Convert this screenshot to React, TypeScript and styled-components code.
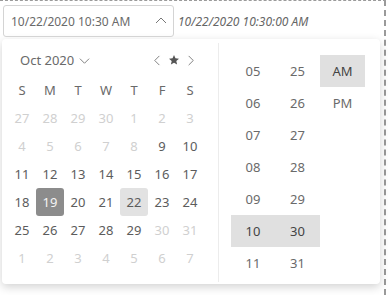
import React from "react";
import styled, { createGlobalStyle } from "styled-components";

const GlobalStyle = createGlobalStyle`
  html, body {
    margin: 0;
    padding: 0;
    background: #ffffff;
    overflow: hidden;
  }
  body {
    font-family: "Segoe UI", "Noto Sans", "Open Sans", sans-serif;
    color: #555;
  }
`;

const Frame = styled.div`
  width: 386px;
  height: 295px;
  box-sizing: border-box;
  border-top: 1px dashed #9a9a9a;
  border-right: 2px dashed #9a9a9a;
  padding: 4px 0 0 2px;
`;

const TopRow = styled.div`
  display: flex;
  align-items: center;
  gap: 4px;
`;

const InputBox = styled.div`
  width: 171px;
  height: 32px;
  box-sizing: border-box;
  margin-left: 1px;
  border: 1px solid #d4d4d4;
  border-radius: 3px;
  display: flex;
  align-items: center;
  justify-content: space-between;
  padding: 0 6px 0 7px;
  font-size: 12px;
  color: #6a6a6a;
`;

const ValueText = styled.span`
  font-size: 12px;
  font-style: italic;
  color: #666;
`;

const Popup = styled.div`
  margin-top: 2px;
  width: 378px;
  height: 245px;
  background: #fff;
  border-radius: 4px;
  box-shadow: 0 3px 10px rgba(0, 0, 0, 0.18);
  display: flex;
`;

const CalendarPane = styled.div`
  width: 216px;
  box-sizing: border-box;
  padding: 9px 12px 0 6px;
`;

const CalHeader = styled.div`
  height: 24px;
  margin-bottom: 4px;
  display: flex;
  align-items: center;
  justify-content: space-between;
  padding: 0 10px 0 12px;
`;

const MonthLabel = styled.div`
  display: flex;
  align-items: center;
  gap: 5px;
  font-size: 13px;
  color: #6a6a6a;
`;

const NavGroup = styled.div`
  display: flex;
  align-items: center;
  gap: 5px;
  color: #666;
`;

const DayGrid = styled.div`
  display: grid;
  grid-template-columns: repeat(7, 28px);
  grid-auto-rows: 28px;
`;

const DayCell = styled.div<{ $muted?: boolean; $selected?: boolean; $today?: boolean; $head?: boolean }>`
  display: flex;
  align-items: center;
  justify-content: center;
  font-size: 13px;
  border-radius: 3px;
  color: ${(p) => (p.$selected ? "#f4f4f4" : p.$muted ? "#d0d0d0" : p.$head ? "#6a6a6a" : "#5c5c5c")};
  background: ${(p) => (p.$selected ? "#8c8c8c" : p.$today ? "#e2e2e2" : "transparent")};
`;

const Divider = styled.div`
  width: 1px;
  background: #ececec;
  margin: 4px 0 2px;
`;

const TimePane = styled.div`
  display: grid;
  grid-template-columns: 44px 45px 45px;
  grid-auto-rows: 32px;
  padding: 16px 0 0 12px;
  align-content: start;
`;

const TimeCell = styled.div<{ $active?: boolean }>`
  display: flex;
  align-items: center;
  justify-content: center;
  font-size: 13px;
  color: ${(p) => (p.$active ? "#444" : "#6a6a6a")};
  background: ${(p) => (p.$active ? "#e0e0e0" : "transparent")};
`;

const Chevron = ({ dir, size = 11 }: { dir: "up" | "down" | "left" | "right"; size?: number }) => {
  const paths: Record<string, string> = {
    up: "M1 8 L6 3 L11 8",
    down: "M1 4 L6 9 L11 4",
    left: "M8 1 L3 6 L8 11",
    right: "M4 1 L9 6 L4 11",
  };
  return (
    <svg width={size} height={size} viewBox="0 0 12 12" fill="none" stroke="#777" strokeWidth="1">
      <path d={paths[dir]} />
    </svg>
  );
};

const Star = () => (
  <svg width="12" height="12" viewBox="0 0 24 24" fill="#555">
    <path d="M12 2 L14.9 8.6 L22 9.3 L16.6 14 L18.2 21 L12 17.3 L5.8 21 L7.4 14 L2 9.3 L9.1 8.6 Z" />
  </svg>
);

const weekDays = ["S", "M", "T", "W", "T", "F", "S"];

type Day = { n: number; muted: boolean };

const buildDays = (): Day[] => {
  const days: Day[] = [];
  [27, 28, 29, 30].forEach((n) => days.push({ n, muted: true }));
  for (let n = 1; n <= 8; n++) days.push({ n, muted: true });
  for (let n = 9; n <= 29; n++) days.push({ n, muted: false });
  [30, 31].forEach((n) => days.push({ n, muted: true }));
  for (let n = 1; n <= 7; n++) days.push({ n, muted: true });
  return days;
};

const hours = ["05", "06", "07", "08", "09", "10", "11"];
const minutes = ["25", "26", "27", "28", "29", "30", "31"];
const periods = ["AM", "PM", "", "", "", "", ""];

const App: React.FC = () => {
  const days = buildDays();
  return (
    <>
      <GlobalStyle />
      <Frame>
        <TopRow>
          <InputBox>
            <span>10/22/2020 10:30 AM</span>
            <Chevron dir="up" size={12} />
          </InputBox>
          <ValueText>10/22/2020 10:30:00 AM</ValueText>
        </TopRow>
        <Popup>
          <CalendarPane>
            <CalHeader>
              <MonthLabel>
                Oct 2020
                <Chevron dir="down" />
              </MonthLabel>
              <NavGroup>
                <Chevron dir="left" />
                <Star />
                <Chevron dir="right" />
              </NavGroup>
            </CalHeader>
            <DayGrid>
              {weekDays.map((d, i) => (
                <DayCell key={"h" + i} $head>
                  {d}
                </DayCell>
              ))}
              {days.map((d, i) => (
                <DayCell
                  key={i}
                  $muted={d.muted}
                  $selected={!d.muted && d.n === 19}
                  $today={!d.muted && d.n === 22}
                >
                  {d.n}
                </DayCell>
              ))}
            </DayGrid>
          </CalendarPane>
          <Divider />
          <TimePane>
            {hours.map((h, i) => (
              <React.Fragment key={h}>
                <TimeCell $active={h === "10"}>{h}</TimeCell>
                <TimeCell $active={minutes[i] === "30"}>{minutes[i]}</TimeCell>
                <TimeCell $active={periods[i] === "AM"}>{periods[i]}</TimeCell>
              </React.Fragment>
            ))}
          </TimePane>
        </Popup>
      </Frame>
    </>
  );
};

export default App;
